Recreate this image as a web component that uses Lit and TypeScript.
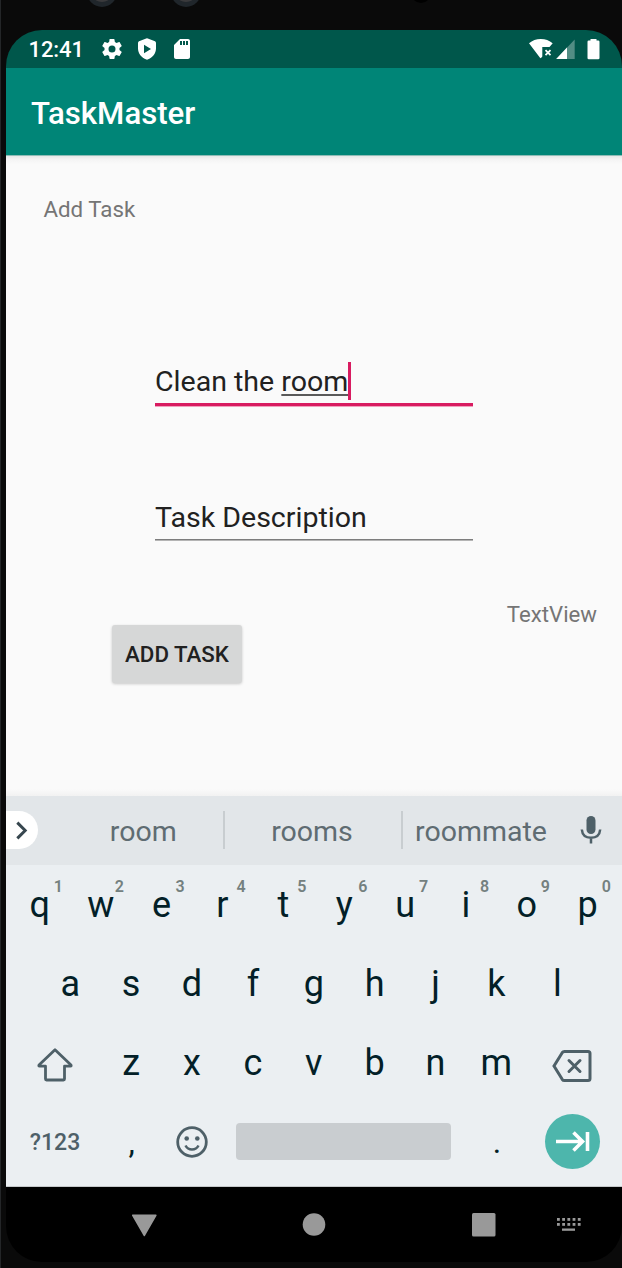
import { LitElement, html, css, svg } from "lit";
import { customElement } from "lit/decorators.js";

@customElement("status-bar")
class StatusBar extends LitElement {
  static styles = css`
    :host { display: flex; align-items: center; height: 38px; background: #00574b; color: #fff; padding: 0 22px 0 22.500px; }
    svg { display: block; fill: #fff; }
    .time { font-size: 22px; font-weight: 500; line-height: 38px; width: 71.500px; padding-top: 2px; letter-spacing: -0.1px; }
    .left { display: flex; gap: 11px; }
    .right { display: flex; margin-left: auto; align-items: flex-start; }
    .cell { margin-left: 3px; }
    .battery { margin-left: 12px; }
  `;
  render() {
    return html`
      <div class="time">12:41</div>
      <div class="left">
        <svg width="24" height="24" viewBox="0 0 24 24"><path d="M19.43 12.98c.04-.32.07-.64.07-.98s-.03-.66-.07-.98l2.11-1.65c.19-.15.24-.42.12-.64l-2-3.46c-.12-.22-.39-.3-.61-.22l-2.49 1c-.52-.4-1.08-.73-1.69-.98l-.38-2.65A.49.49 0 0 0 14 2h-4c-.25 0-.46.18-.49.42l-.38 2.65c-.61.25-1.17.59-1.69.98l-2.49-1c-.23-.09-.49 0-.61.22l-2 3.46c-.13.22-.07.49.12.64l2.11 1.65c-.04.32-.07.65-.07.98s.03.66.07.98l-2.11 1.65c-.19.15-.24.42-.12.64l2 3.46c.12.22.39.3.61.22l2.49-1c.52.4 1.08.73 1.69.98l.38 2.65c.03.24.24.42.49.42h4c.25 0 .46-.18.49-.42l.38-2.65c.61-.25 1.17-.59 1.69-.98l2.49 1c.23.09.49 0 .61-.22l2-3.46c.12-.22.07-.49-.12-.64l-2.11-1.65zM12 15.5a3.5 3.5 0 1 1 0-7 3.5 3.5 0 0 1 0 7z"/></svg>
        <svg width="24" height="24" viewBox="0 0 24 24"><path fill-rule="evenodd" d="M11.2 1.4Q12 .9 12.8 1.4L20 4.3Q21 4.8 21 6V11.5C21 16.500 17.500 20.800 12.600 22.600Q12 22.800 11.400 22.600C6.500 20.800 3 16.500 3 11.500V6Q3 4.800 4 4.300ZM9 7.800V16.200L16 12Z"/></svg>
        <svg width="24" height="24" viewBox="0 0 24 24"><path d="M18 2h-8L4.020 8 4 20c0 1.100.900 2 2 2h12c1.100 0 2-.900 2-2V4c0-1.100-.900-2-2-2zm-6 6h-2V4h2v4zm3 0h-2V4h2v4zm3 0h-2V4h2v4z"/></svg>
      </div>
      <div class="right">
        <svg width="24" height="21" viewBox="0 0 24 21"><path d="M0 4.300Q5 0 11.800 0T23.700 4.300L20.500 8H13.300V17.500L11.800 19.200L11 18.800Z"/><path d="M16.500 11.200l5 5m0-5l-5 5" stroke="#fff" stroke-width="1.800"/></svg>
        <svg class="cell" width="19" height="21" viewBox="0 0 19 21"><path d="M18.700 .500V20H.200Z" fill-opacity=".32"/><path d="M11 8.600V20H.200Z"/></svg>
        <svg class="battery" width="13" height="21" viewBox="0 0 13 21"><path d="M3.500 0h6v1.500h1.700q1.300 0 1.300 1.300V18.900q0 1.300-1.300 1.300H1.800Q.500 20.200 .500 18.900V2.800q0-1.300 1.300-1.300H3.500z"/></svg>
      </div>
    `;
  }
}

@customElement("task-form")
class TaskForm extends LitElement {
  static styles = css`
    :host { display: flex; flex-direction: column; height: 641px; box-sizing: border-box; background: linear-gradient(#8fbdb7 1px, #e6e7e7 1px, #f3f3f3 4px, #fafafa 9px, #fafafa 634px, #f2f2f2 641px); }
    .label { font-size: 22.300px; line-height: 28px; color: #757575; margin: 40px 0 0 37.500px; }
    .field { width: 318px; margin-left: 149px; font-size: 28.550px; line-height: 38px; color: #212121; box-sizing: border-box; white-space: nowrap; }
    .focused { display: flex; margin-top: 139px; height: 44px; border-bottom: 3px solid #d81b60; box-shadow: 0 1px #f0a0bd; }
    .text { padding-top: 1px; }
    .composing { text-decoration: underline; text-decoration-color: #5a5a5a; text-decoration-thickness: 2px; text-underline-offset: 3px; text-decoration-skip-ink: none; }
    .caret { width: 3px; height: 38px; background: #d81b60; }
    .second { margin-top: 92px; padding-top: 1px; height: 42px; border-bottom: 1px solid #7d7d7d; box-shadow: 0 1px #b4b4b4; }
    .actions { display: flex; justify-content: space-between; padding: 60px 25px 0 106px; }
    .button { display: block; margin: 25px 0 0; padding: 1px 0 0; border: 0; width: 130px; height: 58px; border-radius: 3px; background: #d6d7d7; color: #212121; font: 500 22.300px/57px Roboto, sans-serif; box-shadow: 0 1px 3px rgba(0,0,0,.2); text-align: center; }
    .view { font-size: 22.200px; line-height: 28px; color: #757575; }
  `;
  render() {
    return html`
      <div class="label">Add Task</div>
      <div class="field focused"><span class="text">Clean the <span class="composing">room</span></span><span class="caret"></span></div>
      <div class="field second">Task Description</div>
      <div class="actions"><button class="button">ADD TASK</button><div class="view">TextView</div></div>
    `;
  }
}

@customElement("soft-keyboard")
class SoftKeyboard extends LitElement {
  static styles = css`
    :host { display: block; background: #ebeff2; height: 391px; box-sizing: border-box; border-bottom: 1px solid #c5c8ca; color: #031f28; }
    svg { display: block; }
    .suggest { display: flex; align-items: center; height: 69px; padding-bottom: 1px; box-sizing: border-box; background: #e2e6e9; color: #5f6c72; font-size: 28.500px; }
    .more { display: flex; align-items: center; width: 31.500px; height: 38px; background: #fff; border-radius: 0 19px 19px 0; }
    .word { width: 176px; text-align: center; line-height: 40px; padding-top: 3px; box-sizing: border-box; }
    .mid { padding-right: 2px; }
    .first { width: 160.500px; margin-left: 25px; padding-left: 1px; }
    .last { width: 157px; padding-right: 1px; }
    .bar { width: 2px; height: 38px; background: #c8cdd0; }
    .mic { margin-left: 19px; }
    .row { display: grid; grid-template-columns: repeat(20, 30.450px); height: 79px; margin-left: 3.400px; }
    .key { position: relative; grid-column: span 2; text-align: center; font-size: 36px; line-height: 80px; }
    .wide { grid-column: span 3; display: flex; align-items: center; justify-content: center; }
    .indent { grid-column: 2 / span 2; }
    .digit { position: absolute; left: 40px; width: 18px; top: 12px; font-size: 16px; line-height: 20px; font-weight: 600; color: #74807f; text-align: center; }
    .mode { font-size: 23px; font-weight: 500; color: #4e6068; }
    .mark { font-size: 32px; padding-left: 1px; }
    .icon { display: flex; align-items: center; justify-content: center; padding-right: 1px; }
    .lower { padding-top: 3px; }
    .erase { padding: 5px 0 0; }
    .space { grid-column: span 8; height: 37px; margin: 21px 14.500px 0 14px; align-self: start; border-radius: 4px; background: #c9cdd0; }
    .go { padding: 0 0 2px; }
    .enter { width: 55px; height: 55px; border-radius: 50%; background: #4db6ac; }
  `;
  render() {
    const top = "qwertyuiop".split("");
    const stroke = "#4e6068";
    return html`
      <div class="suggest">
        <div class="more"><svg width="32" height="38" viewBox="0 0 32 38"><path d="M11.500 11.500l8 8-8 8" fill="none" stroke="#37474f" stroke-width="3"/></svg></div>
        <div class="word first">room</div><div class="bar"></div>
        <div class="word mid">rooms</div><div class="bar"></div>
        <div class="word last">roommate</div>
        <svg class="mic" width="24" height="30" viewBox="0 0 24 30"><rect x="7.500" y="1" width="9" height="18" rx="4.500" fill="#4e6068"/><path d="M2.800 14.500C3.300 20 7 22.800 12 22.800S20.700 20 21.200 14.500M12 23v5.500" fill="none" stroke=${stroke} stroke-width="2.500"/></svg>
      </div>
      <div class="row">${top.map((k, i) => html`<div class="key">${k}<span class="digit">${(i + 1) % 10}</span></div>`)}</div>
      <div class="row">${"asdfghjkl".split("").map((k, i) => html`<div class="key ${i ? "" : "indent"}">${k}</div>`)}</div>
      <div class="row">
        <div class="wide lower"><svg width="36" height="36" viewBox="0 0 36 36"><path d="M18 2.800L34 18Q34.500 19.200 33.500 19.200H27.500V32Q27.500 33 26.500 33H9.500Q8.500 33 8.500 32V19.200H2.500Q1.500 19.200 2 18Z" fill="none" stroke=${stroke} stroke-width="2.800" stroke-linejoin="round"/></svg></div>
        ${"zxcvbnm".split("").map((k) => html`<div class="key">${k}</div>`)}
        <div class="wide erase"><svg width="40" height="36" viewBox="0 0 40 36"><path d="M12.500 3.500H36Q38 3.500 38 5.500V30.500Q38 32.500 36 32.500H12.500Q11 32.500 10.200 31.300L2 18L10.200 4.700Q11 3.500 12.500 3.500Z" fill="none" stroke=${stroke} stroke-width="3"/><path d="M17 12.500l11 11m0-11l-11 11" stroke=${stroke} stroke-width="3" stroke-linecap="round"/></svg></div>
      </div>
      <div class="row">
        <div class="wide mode">?123</div>
        <div class="key mark">,</div>
        <div class="icon key"><svg width="32" height="32" viewBox="0 0 32 32"><circle cx="16" cy="16" r="14.300" fill="none" stroke=${stroke} stroke-width="2.800"/><circle cx="10.700" cy="12.500" r="2.300" fill=${stroke}/><circle cx="21.300" cy="12.500" r="2.300" fill=${stroke}/><path d="M9.500 19.500Q11.500 23.500 16 23.500T22.500 19.500" fill="none" stroke=${stroke} stroke-width="2.500"/></svg></div>
        <div class="space"></div>
        <div class="key mark">.</div>
        <div class="wide go"><svg class="enter" viewBox="0 0 55 55"><path d="M11 27.500H37M28.500 18.500l9 9-9 9M42.500 18v19" fill="none" stroke="#fff" stroke-width="3.600"/></svg></div>
      </div>
    `;
  }
}

@customElement("nav-bar")
class NavBar extends LitElement {
  static styles = css`
    :host { display: block; height: 75px; background: #000; }
    svg { display: block; }
  `;
  render() {
    const dots = [0, 1, 2, 3, 4].map((i) => svg`<rect x=${551 + i * 5.2} y="31" width="2.800" height="2.800"/><rect x=${551 + i * 5.2} y="36" width="2.800" height="2.800"/>`);
    return html`<svg width="616" height="75" viewBox="0 0 616 75" fill="#999">
      <path d="M126.500 27.500h23.500q1 .200.500 1.300l-11.500 20q-.700 1-1.400 0l-11.500-20q-.500-1.100.400-1.300z"/>
      <circle cx="308" cy="37.500" r="11.300"/>
      <rect x="466" y="26" width="23.500" height="23.500" rx="1.500"/>
      ${dots}<rect x="556" y="41.500" width="13" height="2.300"/>
    </svg>`;
  }
}

@customElement("app-root")
class AppRoot extends LitElement {
  static styles = css`
    :host { display: flex; flex-direction: column; width: 622px; height: 1268px; box-sizing: border-box; overflow: hidden; background: linear-gradient(90deg, #242628 1px, #0a0a0a 1px); font-family: Roboto, sans-serif; }
    .bezel { display: block; flex: none; }
    .screen { width: 616px; height: 1232px; margin-left: 6px; border-radius: 36px; overflow: hidden; flex: none; }
    .appbar { height: 87px; background: #008577; color: #fff; font-size: 31.200px; font-weight: 500; line-height: 92px; padding-left: 25px; }
  `;
  render() {
    return html`
      <svg class="bezel" width="622" height="30" viewBox="0 0 622 30">
        <circle cx="102" cy="-8" r="15" fill="#20262b"/><ellipse cx="102" cy="-3" rx="8" ry="5" fill="#3a3a3c"/>
        <circle cx="186" cy="-8" r="15" fill="#20262b"/><ellipse cx="186" cy="-3" rx="8" ry="5" fill="#3a3a3c"/>
        <circle cx="421" cy="-7" r="10" fill="#000"/>
      </svg>
      <div class="screen">
        <status-bar></status-bar>
        <div class="appbar">TaskMaster</div>
        <task-form></task-form>
        <soft-keyboard></soft-keyboard>
        <nav-bar></nav-bar>
      </div>
    `;
  }
}
